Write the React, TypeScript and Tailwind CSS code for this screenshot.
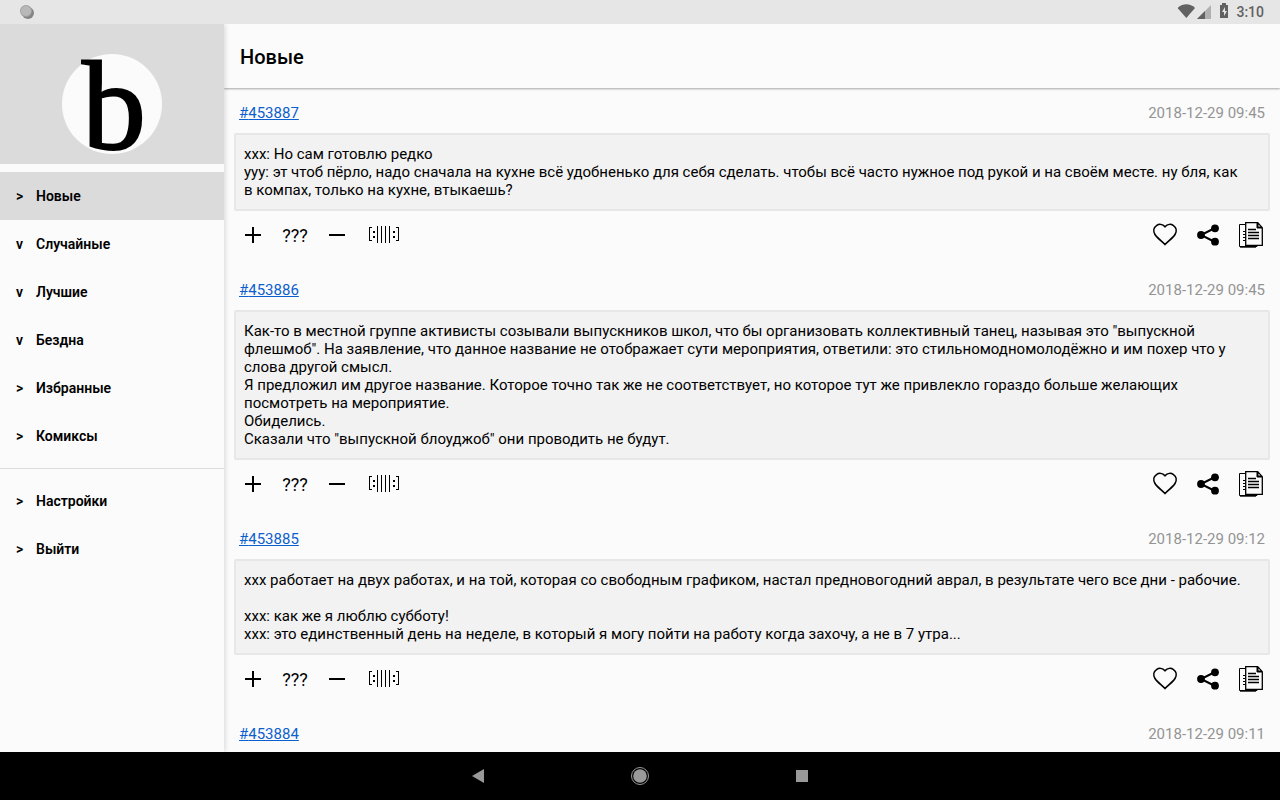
import type { ReactNode } from 'react';

interface MenuEntry {
  mark: string;
  label: string;
  active?: boolean;
}

interface Quote {
  id: string;
  date: string;
  text: string;
}

const mainMenu: MenuEntry[] = [
  { mark: '>', label: 'Новые', active: true },
  { mark: 'v', label: 'Случайные' },
  { mark: 'v', label: 'Лучшие' },
  { mark: 'v', label: 'Бездна' },
  { mark: '>', label: 'Избранные' },
  { mark: '>', label: 'Комиксы' },
];

const userMenu: MenuEntry[] = [
  { mark: '>', label: 'Настройки' },
  { mark: '>', label: 'Выйти' },
];

const quotes: Quote[] = [
  {
    id: '453887',
    date: '2018-12-29 09:45',
    text: `xxx: Но сам готовлю редко
yyy: эт чтоб пёрло, надо сначала на кухне всё удобненько для себя сделать. чтобы всё часто нужное под рукой и на своём месте. ну бля, как в компах, только на кухне, втыкаешь?`,
  },
  {
    id: '453886',
    date: '2018-12-29 09:45',
    text: `Как-то в местной группе активисты созывали выпускников школ, что бы организовать коллективный танец, называя это "выпускной флешмоб". На заявление, что данное название не отображает сути мероприятия, ответили: это стильномодномолодёжно и им похер что у слова другой смысл.
Я предложил им другое название. Которое точно так же не соответствует, но которое тут же привлекло гораздо больше желающих посмотреть на мероприятие.
Обиделись.
Сказали что "выпускной блоуджоб" они проводить не будут.`,
  },
  {
    id: '453885',
    date: '2018-12-29 09:12',
    text: `xxx работает на двух работах, и на той, которая со свободным графиком, настал предновогодний аврал, в результате чего все дни - рабочие.

xxx: как же я люблю субботу!
xxx: это единственный день на неделе, в который я могу пойти на работу когда захочу, а не в 7 утра...`,
  },
  { id: '453884', date: '2018-12-29 09:11', text: '' },
];

function StatusBar() {
  return (
    <div className="relative z-20 flex h-6 shrink-0 items-center justify-between bg-[#e6e6e6] px-4">
      <svg width="22" height="24" viewBox="0 0 22 24">
        <circle cx="12" cy="13" r="6" fill="#858585" />
        <circle cx="10" cy="11" r="6" fill="#a0a0a0" />
        <circle cx="10" cy="11" r="5" fill="#b8b8b8" />
      </svg>
      <div className="flex items-center">
        <svg width="54" height="24" viewBox="0 0 54 24" fill="#616161">
          <path d="M-.5 8C5 3 12 3 17 8L8.300 18Z" />
          <path d="M33 5V19H19Z" fill="#b0b0b0" />
          <path d="M27 11V19H19Z" />
          <path d="M44 3h4v2h2v13h-8V5h2zM47 7l-3 5h2v4l3-5h-2z" fillRule="evenodd" />
        </svg>
        <span className="ml-1 text-sm font-medium text-[#616161]">3:10</span>
      </div>
    </div>
  );
}

function MenuItem({ mark, label, active }: MenuEntry) {
  return (
    <a
      href="#"
      className={`flex h-12 items-center px-4 text-sm font-semibold text-black ${active ? 'bg-[#dbdbdb]' : ''}`}
    >
      <span className="w-5">{mark}</span>
      {label}
    </a>
  );
}

function Sidebar() {
  return (
    <aside className="z-10 w-56 shrink-0 bg-[#fbfbfb] shadow-[1px_0_5px_rgba(0,0,0,0.15)]">
      <div className="flex h-35 items-end justify-center bg-[#dbdbdb] pb-2.5">
        <div className="flex size-25 items-center justify-center rounded-full bg-[#fbfbfb] pt-1 pl-1">
          <span className="font-['Liberation_Serif',serif] text-[128px] leading-[100px] text-black [-webkit-text-stroke:2px_black]">
            b
          </span>
        </div>
      </div>
      <nav>
        <div className="py-2">
          {mainMenu.map((item) => (
            <MenuItem key={item.label} {...item} />
          ))}
        </div>
        <div className="border-t border-[#dbdbdb] py-2">
          {userMenu.map((item) => (
            <MenuItem key={item.label} {...item} />
          ))}
        </div>
      </nav>
    </aside>
  );
}

function IconButton({ label, children }: { label: string; children: ReactNode }) {
  return (
    <button type="button" aria-label={label} className="flex h-12 min-w-[38px] items-center justify-center">
      {children}
    </button>
  );
}

function QuoteActions() {
  return (
    <div className="flex items-center justify-between">
      <div className="flex">
        <IconButton label="Плюс">
          <svg width="16" height="16" viewBox="0 0 16 16" fill="#000">
            <path d="M7 0h2v7h7v2H9v7H7V9H0V7h7z" />
          </svg>
        </IconButton>
        <button type="button" className="h-12 w-[46px] pt-0.5 text-lg text-black">???</button>
        <IconButton label="Минус">
          <svg width="16" height="16" viewBox="0 0 16 16" fill="#000">
            <path d="M0 7h16v2H0z" />
          </svg>
        </IconButton>
        <button type="button" aria-label="Баян" className="flex h-12 w-14 items-center justify-center">
          <svg width="30" height="18" viewBox="0 0 30 18" fill="#000" shapeRendering="crispEdges">
            <path d="M0 1h3v1H1v12h2v1H0zM30 1h-3v1h2v12h-2v1h3zM4 5h2v2H4zM4 10h2v2H4zM24 5h2v2h-2zM24 10h2v2h-2z" />
            <path d="M8 0h1v17H8zM12 0h1v17h-1zM16 0h1v17h-1zM20 0h1v17h-1z" />
          </svg>
        </button>
      </div>
      <div className="flex gap-[5px]">
        <IconButton label="В избранное">
          <svg width="26" height="24" viewBox="0 0 26 24" fill="none" stroke="#000" strokeWidth="1.6">
            <path d="M13 3.700C10.500 1 7 .8 4.800 2.300C1.500 4.500 1 8.200 3 11.500C5 14.800 9 17.500 13 21.500C17 17.500 21 14.800 23 11.500C25 8.200 24.500 4.500 21.200 2.300C19 .8 15.500 1 13 3.700Z" />
          </svg>
        </IconButton>
        <IconButton label="Поделиться">
          <svg width="22" height="22" viewBox="0 0 22 22" fill="#000">
            <path d="M18 4L4 11l14 7" fill="none" stroke="#000" strokeWidth="2" />
            <circle cx="18" cy="4.300" r="3.900" />
            <circle cx="4" cy="11" r="3.900" />
            <circle cx="18" cy="17.700" r="3.900" />
          </svg>
        </IconButton>
        <IconButton label="Копировать">
          <svg width="24" height="26" viewBox="0 0 24 26" fill="none" stroke="#000" strokeWidth="1">
            <path d="M6 2.500H.5v22H18v-1" />
            <path d="M1 25.200h16" />
            <path d="M4 9.500h2M4 12.500h2M4 15.500h2M4 18.500h2" />
            <path d="M6.700.7h12l4.600 5v17.600H6.700z" strokeWidth="1.300" />
            <path d="M18 1v5h5z" fill="#000" />
            <path d="M19.500 2.500v2h2z" fill="#fff" stroke="none" />
            <path d="M9 7.500h8M9 10.500h11M9 13.500h11M9 16.500h11" strokeWidth="1.300" />
          </svg>
        </IconButton>
      </div>
    </div>
  );
}

function QuoteCard({ id, date, text }: Quote) {
  return (
    <article className="pb-2">
      <div className="flex h-[43px] items-center justify-between px-[5px] pt-1 text-[15px]">
        <a href="#" className="text-[#0c5fce] underline">#{id}</a>
        <time className="text-[#949494]">{date}</time>
      </div>
      {text && (
        <>
          <p className="whitespace-pre-line rounded-xs border-2 border-[#e7e7e7] bg-[#f2f2f2] py-2.5 pr-6 pl-2 text-[15px] leading-[18px] text-black">
            {text}
          </p>
          <QuoteActions />
        </>
      )}
    </article>
  );
}

function NavigationBar() {
  return (
    <div className="flex h-12 shrink-0 items-center justify-center gap-[114px] bg-black">
      <button type="button" aria-label="Назад" className="flex size-12 items-center justify-center">
        <svg width="14" height="16" viewBox="0 0 14 16" fill="#999">
          <path d="M13 1v14L1 8z" />
        </svg>
      </button>
      <button type="button" aria-label="Домой" className="flex size-12 items-center justify-center">
        <svg width="18" height="18" viewBox="0 0 18 18">
          <circle cx="9" cy="9" r="8.500" fill="none" stroke="#999" />
          <circle cx="9" cy="9" r="6.800" fill="#999" />
        </svg>
      </button>
      <button type="button" aria-label="Обзор" className="flex size-12 items-center justify-center">
        <span className="size-3 bg-[#999]" />
      </button>
    </div>
  );
}

export default function App() {
  return (
    <div className="flex h-screen flex-col overflow-hidden bg-[#fbfbfb] font-[Roboto,sans-serif]">
      <StatusBar />
      <div className="flex min-h-0 flex-1">
        <Sidebar />
        <main className="flex min-w-0 flex-1 flex-col">
          <header className="flex h-16 shrink-0 items-center px-4 pt-0.5 shadow-[0_1px_2px_rgba(0,0,0,0.35)]">
            <h1 className="text-xl font-medium text-black">Новые</h1>
          </header>
          <div className="min-h-0 flex-1 overflow-hidden px-2.5 pt-0.5">
            {quotes.map((quote) => (
              <QuoteCard key={quote.id} {...quote} />
            ))}
          </div>
        </main>
      </div>
      <NavigationBar />
    </div>
  );
}
